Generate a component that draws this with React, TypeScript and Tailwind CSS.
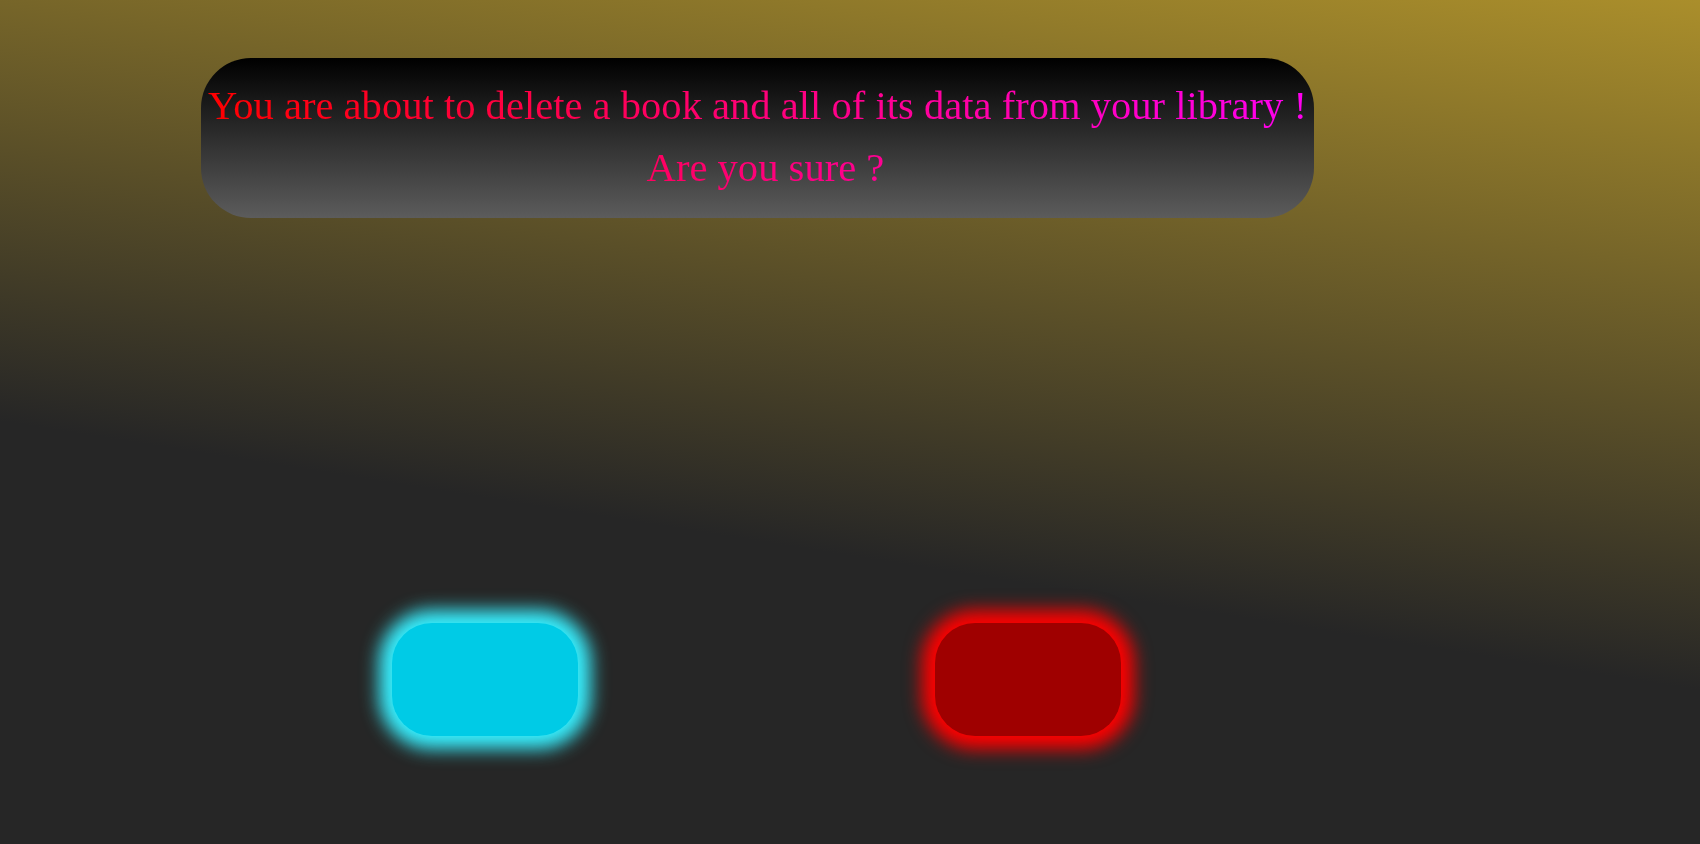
export default function App() {
  return (
    <div className="min-h-screen w-full bg-[linear-gradient(9deg,#262626_38%,#aa8e2b_100%)] pt-[58px] pl-[201px] font-['Liberation_Serif',serif]">
      {/* warning box */}
      <div className="w-[1113px] h-[160px] rounded-[50px] bg-[linear-gradient(to_bottom,#000000,#5c5c5c)] pt-[17px]">
        <div className="w-fit mx-auto bg-[linear-gradient(to_right,#ff0000,#ff00f0)] bg-clip-text text-transparent text-[40.6px] leading-[62px]">
          <p className="text-center whitespace-nowrap">You are about to delete a book and all of its data from your library !</p>
          <p className="text-center pl-[16px]">Are you sure ?</p>
        </div>
      </div>

      {/* buttons */}
      <div className="flex mt-[405px] pl-[191px] gap-[357px]">
        <button className="w-[186px] h-[113px] rounded-[40px] bg-[#00cbe6] shadow-[0_0_18px_13px_#38f0ff]" />
        <button className="w-[186px] h-[113px] rounded-[40px] bg-[#9f0000] shadow-[0_0_18px_13px_#ff0000]" />
      </div>
    </div>
  );
}
